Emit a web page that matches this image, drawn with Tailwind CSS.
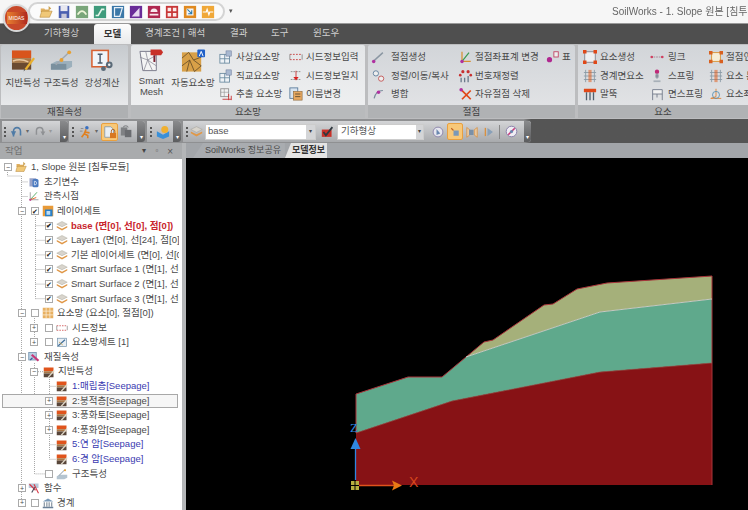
<!DOCTYPE html>
<html lang="ko">
<head>
  <meta charset="UTF-8">
  <title>SoilWorks</title>
  <script src="https://cdn.jsdelivr.net/npm/@tailwindcss/browser@4"></script>
</head>
<body class="w-[748px] h-[510px] overflow-hidden bg-[#555] font-['Liberation_Sans','Noto_Sans_CJK_KR',sans-serif] text-[9.5px] text-[#444]">

  <!-- shared icons -->
  <svg class="hidden">
    <symbol id="open" viewBox="0 0 16 16"><path d="M2 4h4l1 1h5v3H2z" fill="#e0b060"/><path d="M1 14l2-7h12l-3 7z" fill="#f0c878" stroke="#b08030" stroke-width=".6"/><path d="M11 1l3 3-3 2z" fill="#c9a050"/></symbol>
    <symbol id="save" viewBox="0 0 16 16"><rect x="2" y="1" width="12" height="14" fill="#4a5fb0"/><rect x="4" y="1" width="8" height="6" fill="#e8e8f0"/><rect x="5" y="10" width="6" height="5" fill="#c8c8d8"/></symbol>
    <symbol id="qa1" viewBox="0 0 16 16"><rect x="1" y="1" width="14" height="14" fill="#7aa67a"/><path d="M3 11q5-8 10 0" fill="none" stroke="#eef5d8" stroke-width="2"/></symbol>
    <symbol id="qa2" viewBox="0 0 16 16"><rect x="1" y="1" width="14" height="14" fill="#3f9b7c"/><path d="M3 12h3l4-7h3" fill="none" stroke="#e4f5ea" stroke-width="1.8"/></symbol>
    <symbol id="qa3" viewBox="0 0 16 16"><rect x="1" y="1" width="14" height="14" fill="#3c78a8"/><path d="M4 3h9l-3 10H4z" fill="none" stroke="#e8f0f8" stroke-width="1.4"/></symbol>
    <symbol id="qa4" viewBox="0 0 16 16"><rect x="1" y="1" width="14" height="14" fill="#6a2c98"/><path d="M3 13l9-10v10z" fill="#e8d8f0"/></symbol>
    <symbol id="qa5" viewBox="0 0 16 16"><rect x="1" y="1" width="14" height="14" fill="#b02850"/><path d="M4 8a4 4 0 018 0z" fill="#f8e8ee"/><rect x="3" y="10" width="10" height="2" fill="#f8e8ee"/></symbol>
    <symbol id="qa6" viewBox="0 0 16 16"><rect x="1" y="1" width="14" height="14" fill="#c83838"/><path d="M3 3h4v4H3zM9 3h4v4H9zM3 9h4v4H3zM9 9h4v4H9z" fill="#fbeaea"/></symbol>
    <symbol id="qa7" viewBox="0 0 16 16"><rect x="1" y="1" width="14" height="14" fill="#e08a20"/><rect x="4" y="4" width="8" height="8" fill="#f0f4f8"/><path d="M5 5l5 5M10 6v4H6" stroke="#2878a8" fill="none" stroke-width="1.2"/></symbol>
    <symbol id="qa8" viewBox="0 0 16 16"><rect x="1" y="1" width="14" height="14" fill="#f0a838"/><path d="M2 8h4l1-3 2 6 1-3h4" fill="none" stroke="#fff" stroke-width="1.4"/></symbol>

    <symbol id="ground" viewBox="0 0 26 24"><rect x="1" y="1" width="20" height="8" fill="#d8541c"/><rect x="1" y="9" width="20" height="5" fill="#a87848"/><rect x="1" y="14" width="20" height="7" fill="#6a4a30"/><path d="M2 12q8-3 16 1" stroke="#e8c8a0" fill="none" stroke-width="1.5"/><path d="M24 9L15 21" stroke="#e8b030" stroke-width="2.4"/><path d="M15 21l-2 2 1-3z" fill="#555"/></symbol>
    <symbol id="beam" viewBox="0 0 26 24"><path d="M2 15l6-3h16v6l-6 3H2z" fill="#9cb0bc"/><path d="M2 15h16v6H2z" fill="#7a909e"/><path d="M7 16L21 3" stroke="#a0a8b0" stroke-width="1.5"/><circle cx="21" cy="3" r="2" fill="#e8a030"/><circle cx="13" cy="11" r="2" fill="#e8a030"/></symbol>
    <symbol id="calc" viewBox="0 0 26 24"><rect x="2" y="1" width="17" height="17" fill="#f0f4f8" stroke="#d86030" stroke-width="1.6"/><path d="M8 5h5M8 14h5M10.500 5v9" stroke="#4a5a6a" stroke-width="1.5"/><circle cx="20" cy="16" r="3.500" fill="#5a6a78"/><circle cx="14" cy="20" r="2.500" fill="#5a6a78"/><circle cx="20" cy="16" r="1.300" fill="#eee"/></symbol>
    <symbol id="smesh" viewBox="0 0 26 24"><path d="M1 2h17v20H4z" fill="#f4f4f4" stroke="#7a7a8a"/><path d="M1 8l8 3 9-5M5 22l4-11 5 11M9 11l9 6M7 2l2 9" stroke="#8a8a98" fill="none" stroke-width=".8"/><path d="M12 0h11l2 3-2 3H12z" fill="#c83028"/><rect x="15" y="6" width="2" height="7" fill="#7a2030"/></symbol>
    <symbol id="amesh" viewBox="0 0 26 24"><rect x="1" y="3" width="20" height="20" fill="#d8a048"/><path d="M1 9l7-6 5 8 8-3M8 3v0M1 17l8-6 5 12M13 11l8 6M9 11l-3 12M14 23l7-6" stroke="#6a5028" fill="none" stroke-width=".9"/><rect x="17" y="0" width="8" height="8" rx="1" fill="#2060c8"/><path d="M19 7l2-5 2 5" stroke="#fff" fill="none"/></symbol>
    <symbol id="grid" viewBox="0 0 16 16"><rect x="1" y="5" width="11" height="10" fill="#eef2f6" stroke="#6a8aa0"/><path d="M1 10h11M6.500 5v10" stroke="#6a8aa0"/><rect x="8" y="1" width="6" height="6" fill="#a8b8d0" stroke="#6a7a9a" stroke-width=".6"/></symbol>
    <symbol id="grid2" viewBox="0 0 16 16"><rect x="2" y="2" width="9" height="9" fill="#f2f2f2" stroke="#909090"/><path d="M2 6h9M6 2v9" stroke="#909090" stroke-width=".7"/><path d="M4 14h10M11 8v7M14 10v5" stroke="#c83030"/></symbol>
    <symbol id="seed" viewBox="0 0 16 16"><path d="M1 5h14M1 11h14" stroke="#c83838" stroke-dasharray="2 1.500"/><path d="M1 5v6M15 5v6" stroke="#888"/></symbol>
    <symbol id="seedm" viewBox="0 0 16 16"><path d="M2 3h12M2 12h12" stroke="#888" stroke-dasharray="2 1"/><path d="M8 2v9" stroke="#c83030"/><path d="M5 9l3 4 3-4z" fill="#d82020"/></symbol>
    <symbol id="rename" viewBox="0 0 16 16"><rect x="1" y="1" width="9" height="12" fill="#d8e4f0" stroke="#5a7a9a"/><rect x="5" y="5" width="10" height="10" fill="#e8a860" stroke="#8a6a40" stroke-width=".7"/><path d="M7 8h6M7 11h6" stroke="#5a4a30"/></symbol>
    <symbol id="nline" viewBox="0 0 16 16"><path d="M2 13L13 3" stroke="#8a96a2" stroke-width="1.600"/><circle cx="2.500" cy="13" r="2" fill="#b030a0"/></symbol>
    <symbol id="nmove" viewBox="0 0 16 16"><circle cx="5" cy="5" r="3" fill="#eee" stroke="#5a7a9a"/><circle cx="11" cy="11" r="3" fill="#eee" stroke="#c05050"/></symbol>
    <symbol id="nmerge" viewBox="0 0 16 16"><path d="M3 13q2-9 10-9" stroke="#7a8a9a" fill="none" stroke-width="1.400"/><circle cx="8" cy="6" r="2" fill="#b030a0"/></symbol>
    <symbol id="naxis" viewBox="0 0 16 16"><path d="M4 2v11h10" stroke="#d89030" fill="none" stroke-width="1.400"/><path d="M4 13L12 3" stroke="#3a9a50" stroke-width="1.400"/><circle cx="4" cy="13" r="2" fill="#b030a0"/></symbol>
    <symbol id="nnum" viewBox="0 0 16 16"><path d="M3 10v5M7 10v5M11 8v7" stroke="#6a7a8a" stroke-width="1.500"/><circle cx="5" cy="3" r="1.800" fill="#c83030"/><circle cx="11" cy="3" r="1.800" fill="#c83030"/><circle cx="14" cy="7" r="1.500" fill="#c83030"/><circle cx="2" cy="7" r="1.500" fill="#c83030"/></symbol>
    <symbol id="ndel" viewBox="0 0 16 16"><path d="M3 3l11 11M14 4L4 14" stroke="#e04818" stroke-width="2"/><circle cx="3" cy="3" r="2" fill="#b030a0"/></symbol>
    <symbol id="ntable" viewBox="0 0 16 16"><circle cx="4" cy="11" r="3" fill="#b02890"/><rect x="9" y="2" width="5" height="6" fill="#eee" stroke="#c04060"/></symbol>
    <symbol id="eel" viewBox="0 0 16 16"><rect x="2" y="2" width="12" height="12" fill="#eef0f2" stroke="#80808a"/><path d="M0 0h4v4H0zM12 0h4v4h-4zM0 12h4v4H0zM12 12h4v4h-4z" fill="#e04818"/></symbol>
    <symbol id="ebnd" viewBox="0 0 16 16"><path d="M1 4h14M1 8h14M1 12h14M3 1v14M13 1v14" stroke="#8a9aa6"/><path d="M7 1v14M9 1v14" stroke="#e06020"/></symbol>
    <symbol id="epile" viewBox="0 0 16 16"><path d="M1 2h14v4H1z" fill="#e04818"/><path d="M4 6v9M8 6v9M12 6v9" stroke="#50606e" stroke-width="1.500"/></symbol>
    <symbol id="elink" viewBox="0 0 16 16"><path d="M1 8h14" stroke="#a08090" stroke-dasharray="2 1"/><circle cx="2" cy="8" r="1.500" fill="#d04060"/><circle cx="14" cy="8" r="1.500" fill="#d04060"/></symbol>
    <symbol id="espr" viewBox="0 0 16 16"><circle cx="8" cy="3" r="2.500" fill="#c02878"/><path d="M8 5v6M6 7h4M6 9h4" stroke="#707888"/><path d="M4 13h8v2H4z" fill="#a8b0b8"/></symbol>
    <symbol id="efsp" viewBox="0 0 16 16"><path d="M3 3h11v5H3zM3 8v7M14 8v7M8 8v4" fill="#f2f2f2" stroke="#707888"/></symbol>
    <symbol id="efr" viewBox="0 0 16 16"><rect x="3" y="3" width="10" height="10" fill="#f6eed8" stroke="#d89030"/><path d="M0 1h4v4H0zM12 1h4v4h-4zM0 11h4v4H0zM12 11h4v4h-4z" fill="#d86020"/></symbol>
    <symbol id="eax" viewBox="0 0 16 16"><path d="M8 2v9M2 13h12M8 11L2 13" stroke="#e08030" fill="none"/><circle cx="8" cy="9" r="4" fill="none" stroke="#5a90b0"/></symbol>

    <symbol id="doc" viewBox="0 0 16 16"><rect x="2" y="3" width="9" height="11" fill="#9aa4c8"/><rect x="6" y="4" width="8" height="11" rx="2" fill="#4a7ac0"/><path d="M8.500 7v5q3 0 3-2.500T8.500 7" stroke="#e8eef8" fill="none"/></symbol>
    <symbol id="axis" viewBox="0 0 16 16"><path d="M3 3v10h11" stroke="#8a8a8a" fill="none"/><path d="M3 13l9-10" stroke="#50a860" stroke-width="1.200"/><path d="M3 13l8-3" stroke="#e06020" stroke-width="1.200"/><circle cx="3" cy="13" r="1.500" fill="#c04090"/></symbol>
    <symbol id="layerset" viewBox="0 0 16 16"><rect x="1" y="1" width="14" height="14" fill="#e89a38"/><rect x="4" y="6" width="10" height="9" fill="#2a80c8"/><rect x="6" y="8" width="5" height="5" fill="#bcdcf4"/></symbol>
    <symbol id="layers" viewBox="0 0 16 16"><path d="M8 2l7 3.500-7 3.500-7-3.500z" fill="#d8d4cc" stroke="#9a958a" stroke-width=".5"/><path d="M1 8l7 3.500L15 8v2l-7 4-7-4z" fill="#e09848"/></symbol>
    <symbol id="mgrid" viewBox="0 0 16 16"><rect x="1" y="1" width="14" height="14" fill="#e8b060"/><path d="M1 5.500h14M1 10.500h14M5.500 1v14M10.500 1v14" stroke="#fbeed8"/></symbol>
    <symbol id="mset" viewBox="0 0 16 16"><rect x="2" y="3" width="12" height="11" fill="#e8eef4" stroke="#7a98b0"/><path d="M3 13l9-8" stroke="#3a6a98" stroke-width="1.500"/><path d="M4 8l5 4" stroke="#c8a040"/></symbol>
    <symbol id="mat" viewBox="0 0 16 16"><rect x="1" y="2" width="10" height="10" fill="#b8d0e4" stroke="#6a8aa8"/><path d="M5 5l9 8" stroke="#c83878" stroke-width="3"/><path d="M3 12l3-3" stroke="#3a5a98" stroke-width="1.500"/></symbol>
    <symbol id="soil" viewBox="0 0 16 16"><rect x="1" y="2" width="13" height="5" fill="#e0541c"/><rect x="1" y="7" width="13" height="3" fill="#a87848"/><rect x="1" y="10" width="13" height="5" fill="#58463a"/><path d="M15 6L7 15" stroke="#e0d8c8" stroke-width="1.600"/></symbol>
    <symbol id="struct" viewBox="0 0 16 16"><path d="M1 11l4-2h10v4l-4 2H1z" fill="#b4c4d0"/><path d="M4 10l8-8" stroke="#7a8a98" stroke-width="1.200"/><circle cx="12" cy="3" r="1.400" fill="#e8a030"/></symbol>
    <symbol id="func" viewBox="0 0 16 16"><rect x="1" y="2" width="13" height="6" fill="#b8c8d8"/><path d="M2 3l8 8M8 3l6 12" stroke="#d83848" stroke-width="1.500"/><path d="M5 14l4-7" stroke="#4a4a5a" stroke-width="1.500"/></symbol>
    <symbol id="bound" viewBox="0 0 16 16"><path d="M1 6l7-4 7 4z" fill="#7a9ab8"/><path d="M3 7v6M6.500 7v6M9.500 7v6M13 7v6" stroke="#6a7a8a" stroke-width="1.300"/><rect x="1" y="13" width="14" height="2" fill="#6a8098"/></symbol>

    <symbol id="undo" viewBox="0 0 16 16"><path d="M4 13V7a4 4 0 018 0v5" fill="none" stroke="#4f7ba6" stroke-width="1.800"/><path d="M1 7l3 6 3-6z" fill="#4f7ba6"/></symbol>
    <symbol id="redo" viewBox="0 0 16 16"><path d="M3 12V7a4 4 0 018 0v5" fill="none" stroke="#8f9194" stroke-width="1.800"/><path d="M8 8l3 5 3-5z" fill="#8f9194"/></symbol>
    <symbol id="run" viewBox="0 0 16 16"><circle cx="9" cy="3" r="2" fill="#3a70c0"/><path d="M8 5L6 10l-3 4M7 8l5 1M6 10l4 2v3" stroke="#e08020" fill="none" stroke-width="1.800"/><path d="M2 4h3M1 7h3" stroke="#888"/></symbol>
    <symbol id="lockdoc" viewBox="0 0 16 16"><path d="M2 2h7l3 3v9H2z" fill="#e8eef4" stroke="#8a9aa8"/><rect x="8" y="9" width="7" height="6" fill="#d87820"/><path d="M9.500 9V7a2 2 0 014 0v2" stroke="#a85a18" fill="none"/></symbol>
    <symbol id="lockg" viewBox="0 0 16 16"><rect x="1" y="3" width="8" height="10" fill="#7f8184"/><rect x="6" y="6" width="8" height="9" fill="#6a6c70"/><path d="M4 3a3 2 0 016 0" stroke="#6a6c70" fill="none"/></symbol>
    <symbol id="view3" viewBox="0 0 16 16"><path d="M1 7l7 4 7-4v6l-7 3-7-3z" fill="#3a90d8"/><circle cx="10" cy="5" r="4" fill="#f0b030"/></symbol>
    <symbol id="check" viewBox="0 0 16 16"><rect x="1" y="5" width="12" height="9" fill="#c83028"/><path d="M3 8l3 4 8-10" stroke="#30383f" fill="none" stroke-width="2.200"/></symbol>
    <symbol id="vcirc" viewBox="0 0 16 16"><circle cx="8" cy="8" r="6.500" fill="#e6e6ee" stroke="#7a70a0"/><path d="M6 4l5 6-5 2z" fill="#6a88b0"/></symbol>
    <symbol id="vsel" viewBox="0 0 16 16"><path d="M3 3l3 3" stroke="#c06020" stroke-width="1.500"/><rect x="6" y="6" width="7" height="7" fill="#7a98b8"/></symbol>
    <symbol id="vbox" viewBox="0 0 16 16"><path d="M1 2l4 3v7l-4 3zM15 2l-4 3v7l4 3z" fill="#e8c8a0" stroke="#d89040"/><rect x="4" y="5" width="6" height="7" fill="#7a90a8"/></symbol>
    <symbol id="vtri" viewBox="0 0 16 16"><path d="M5 2l8 6-8 6z" fill="#88a0b8"/><path d="M2 2v12" stroke="#d89040" stroke-width="2"/></symbol>
    <symbol id="vno" viewBox="0 0 16 16"><circle cx="8" cy="8" r="6.500" fill="#f0eef4" stroke="#7a70a0"/><path d="M4 12l8-8" stroke="#c83878" stroke-width="2"/><circle cx="8" cy="8" r="2" fill="#6a88b0"/></symbol>
  </svg>

  <div class="flex flex-col w-[748px] h-[510px] blur-[0.4px]">
    <!-- title row -->
    <div class="relative flex items-center h-[23px] bg-[#f6f6f6]">
      <div class="absolute left-[3px] top-[4px] z-10 flex items-center justify-center w-[27px] h-[28px] rounded-full border-2 border-[#d8d8d8] bg-[#c8492a] shadow">
        <div class="w-[20px] h-[12px] bg-linear-to-r from-[#e88030] to-[#b02820] text-[5px] leading-[12px] text-white text-center">MIDAS</div>
      </div>
      <div class="flex items-center gap-[4px] ml-[28px] w-[197px] h-[19px] pl-[9px] rounded-full border-2 border-[#d4d4d4] bg-[#fbfbfb]">
        <svg class="w-[14px] h-[14px]"><use href="#open"/></svg>
        <svg class="w-[14px] h-[14px]"><use href="#save"/></svg>
        <svg class="w-[14px] h-[14px]"><use href="#qa1"/></svg>
        <svg class="w-[14px] h-[14px]"><use href="#qa2"/></svg>
        <svg class="w-[14px] h-[14px]"><use href="#qa3"/></svg>
        <svg class="w-[14px] h-[14px]"><use href="#qa4"/></svg>
        <svg class="w-[14px] h-[14px]"><use href="#qa5"/></svg>
        <svg class="w-[14px] h-[14px]"><use href="#qa6"/></svg>
        <svg class="w-[14px] h-[14px]"><use href="#qa7"/></svg>
        <svg class="w-[14px] h-[14px]"><use href="#qa8"/></svg>
      </div>
      <span class="ml-[4px] text-[7px] text-[#555]">▾</span>
      <div class="ml-auto w-[136px] overflow-hidden whitespace-nowrap text-[10px] text-[#666]">SoilWorks - 1. Slope 원본 [침투모듈]</div>
    </div>

    <!-- ribbon tabs -->
    <div class="flex items-end h-[21px] bg-[#4f4f4f] text-[#cfcfcf] border-t border-[#999]">
      <span class="ml-[44px] mb-[4px] w-[50px]">기하형상</span>
      <span class="flex items-center justify-center w-[37px] h-[20px] rounded-t-[3px] bg-linear-to-b from-[#fdfdfd] to-[#e8e9ea] text-[#333] font-bold">모델</span>
      <span class="ml-[14px] mb-[4px] w-[85px]">경계조건 | 해석</span>
      <span class="mb-[4px] w-[41px]">결과</span>
      <span class="mb-[4px] w-[42px]">도구</span>
      <span class="mb-[4px]">윈도우</span>
    </div>

    <!-- ribbon -->
    <div class="flex gap-[3px] h-[75px] pt-[1px] pb-[1px] pl-[1px] bg-[#bcbdbf] overflow-hidden text-[#4a4a4a]">
      <div class="flex flex-col w-[127px] shrink-0 rounded-[2px] bg-linear-to-b from-[#c6cace] to-[#eff0f1]">
        <div class="flex flex-1 pl-[3px] pt-[4px]">
          <div class="flex flex-col items-center w-[38px]"><svg class="w-[25px] h-[24px]"><use href="#ground"/></svg><span class="mt-[3px] whitespace-nowrap">지반특성</span></div>
          <div class="flex flex-col items-center w-[38px]"><svg class="w-[25px] h-[24px]"><use href="#beam"/></svg><span class="mt-[3px] whitespace-nowrap">구조특성</span></div>
          <div class="flex flex-col items-center w-[44px]"><svg class="w-[25px] h-[24px]"><use href="#calc"/></svg><span class="mt-[3px] whitespace-nowrap">강성계산</span></div>
        </div>
        <div class="h-[13px] text-center leading-[13px] bg-[#aeb0b2] text-[#444]">재질속성</div>
      </div>

      <div class="flex flex-col w-[234px] shrink-0 rounded-[2px] bg-linear-to-b from-[#e4e6e8] to-[#f0f1f2]">
        <div class="flex flex-1 pt-[4px]">
          <div class="flex flex-col items-center w-[39px] ml-[1px] leading-[11px]"><svg class="w-[25px] h-[24px]"><use href="#smesh"/></svg><span class="mt-[2px] text-center">Smart<br>Mesh</span></div>
          <div class="flex flex-col items-center w-[44px]"><svg class="w-[25px] h-[24px]"><use href="#amesh"/></svg><span class="mt-[3px] whitespace-nowrap">자동요소망</span></div>
          <div class="ml-[4px] w-[70px] -mt-[1px]">
            <div class="flex items-center h-[18.500px]"><svg class="w-[14px] h-[14px] mr-[3px]"><use href="#grid"/></svg>사상요소망</div>
            <div class="flex items-center h-[18.500px]"><svg class="w-[14px] h-[14px] mr-[3px]"><use href="#grid"/></svg>직교요소망</div>
            <div class="flex items-center h-[18.500px]"><svg class="w-[14px] h-[14px] mr-[3px]"><use href="#grid2"/></svg>추출 요소망</div>
          </div>
          <div class="w-[72px] -mt-[1px]">
            <div class="flex items-center h-[18.500px]"><svg class="w-[14px] h-[14px] mr-[3px]"><use href="#seed"/></svg>시드정보입력</div>
            <div class="flex items-center h-[18.500px]"><svg class="w-[14px] h-[14px] mr-[3px]"><use href="#seedm"/></svg>시드정보일치</div>
            <div class="flex items-center h-[18.500px]"><svg class="w-[14px] h-[14px] mr-[3px]"><use href="#rename"/></svg>이름변경</div>
          </div>
        </div>
        <div class="h-[13px] text-center leading-[13px] bg-[#b8babc] text-[#444]">요소망</div>
      </div>

      <div class="flex flex-col w-[207px] shrink-0 rounded-[2px] bg-linear-to-b from-[#d2d5d9] to-[#e4e5e7]">
        <div class="flex flex-1 pt-[3px] pl-[3px]">
          <div class="w-[87px]">
            <div class="flex items-center h-[18.500px]"><svg class="w-[15px] h-[14px] mr-[5px]"><use href="#nline"/></svg>절점생성</div>
            <div class="flex items-center h-[18.500px]"><svg class="w-[15px] h-[14px] mr-[5px]"><use href="#nmove"/></svg>정렬/이동/복사</div>
            <div class="flex items-center h-[18.500px]"><svg class="w-[15px] h-[14px] mr-[5px]"><use href="#nmerge"/></svg>병합</div>
          </div>
          <div class="w-[88px]">
            <div class="flex items-center h-[18.500px]"><svg class="w-[15px] h-[14px] mr-[2px]"><use href="#naxis"/></svg>절점좌표계 변경</div>
            <div class="flex items-center h-[18.500px]"><svg class="w-[15px] h-[14px] mr-[2px]"><use href="#nnum"/></svg>번호재정렬</div>
            <div class="flex items-center h-[18.500px]"><svg class="w-[15px] h-[14px] mr-[2px]"><use href="#ndel"/></svg>자유절점 삭제</div>
          </div>
          <div class="flex items-center h-[18.500px]"><svg class="w-[14px] h-[14px] mr-[2px]"><use href="#ntable"/></svg>표</div>
        </div>
        <div class="h-[13px] text-center leading-[13px] bg-[#b0b2b4] text-[#444]">절점</div>
      </div>

      <div class="flex flex-col w-[170px] shrink-0 bg-linear-to-b from-[#d2d5d9] to-[#e4e5e7]">
        <div class="flex flex-1 pt-[3px] pl-[5px] overflow-hidden whitespace-nowrap">
          <div class="w-[67px] shrink-0">
            <div class="flex items-center h-[18.500px]"><svg class="w-[14px] h-[14px] mr-[3px]"><use href="#eel"/></svg>요소생성</div>
            <div class="flex items-center h-[18.500px]"><svg class="w-[14px] h-[14px] mr-[3px]"><use href="#ebnd"/></svg>경계면요소</div>
            <div class="flex items-center h-[18.500px]"><svg class="w-[14px] h-[14px] mr-[3px]"><use href="#epile"/></svg>말뚝</div>
          </div>
          <div class="w-[59px] shrink-0">
            <div class="flex items-center h-[18.500px]"><svg class="w-[14px] h-[14px] mr-[4px]"><use href="#elink"/></svg>링크</div>
            <div class="flex items-center h-[18.500px]"><svg class="w-[14px] h-[14px] mr-[4px]"><use href="#espr"/></svg>스프링</div>
            <div class="flex items-center h-[18.500px]"><svg class="w-[14px] h-[14px] mr-[4px]"><use href="#efsp"/></svg>면스프링</div>
          </div>
          <div class="shrink-0">
            <div class="flex items-center h-[18.500px]"><svg class="w-[14px] h-[14px] mr-[3px]"><use href="#efr"/></svg>절점연결</div>
            <div class="flex items-center h-[18.500px]"><svg class="w-[14px] h-[14px] mr-[3px]"><use href="#ebnd"/></svg>요소 분할</div>
            <div class="flex items-center h-[18.500px]"><svg class="w-[14px] h-[14px] mr-[3px]"><use href="#eax"/></svg>요소좌표계</div>
          </div>
        </div>
        <div class="h-[13px] text-center leading-[13px] bg-[#b0b2b4] text-[#444]">요소</div>
      </div>
    </div>

    <!-- toolbars -->
    <div class="flex h-[24px] pt-[2px] pb-[1px] pl-[2px] gap-[1px] bg-linear-to-r from-[#8f9092] from-[70%] to-[#555] to-[71%] text-[#666]">
      <div class="flex items-center w-[66px] rounded-r-[3px] bg-linear-to-b from-[#d4d5d7] to-[#a8aaad]">
        <span class="ml-[2px] w-[2px] h-[10px] border-l-2 border-dotted border-[#555]"></span>
        <svg class="ml-[4px] w-[14px] h-[14px]"><use href="#undo"/></svg><span class="ml-[2px] text-[6px]">▾</span>
        <svg class="ml-[5px] w-[13px] h-[13px]"><use href="#redo"/></svg><span class="ml-[2px] text-[6px] text-[#999]">▾</span>
        <span class="ml-auto flex items-end justify-center w-[8px] h-full rounded-r-[3px] bg-linear-to-b from-[#8a8b8d] to-[#5c5d5f] text-[6px] text-white">▾</span>
      </div>
      <div class="flex items-center w-[76px] rounded-r-[3px] bg-linear-to-b from-[#d4d5d7] to-[#a8aaad]">
        <span class="ml-[3px] w-[2px] h-[10px] border-l-2 border-dotted border-[#555]"></span>
        <svg class="ml-[5px] w-[14px] h-[14px]"><use href="#run"/></svg><span class="ml-[2px] text-[6px]">▾</span>
        <span class="ml-[3px] flex items-center justify-center w-[17px] h-[18px] rounded-[2px] border border-[#e8a040] bg-[#f8c878]"><svg class="w-[14px] h-[14px]"><use href="#lockdoc"/></svg></span>
        <svg class="ml-[2px] w-[13px] h-[13px]"><use href="#lockg"/></svg>
        <span class="ml-auto flex items-end justify-center w-[8px] h-full rounded-r-[3px] bg-linear-to-b from-[#8a8b8d] to-[#5c5d5f] text-[6px] text-white">▾</span>
      </div>
      <div class="flex items-center w-[34px] ml-[1px] rounded-r-[3px] bg-linear-to-b from-[#d4d5d7] to-[#a8aaad]">
        <span class="ml-[3px] w-[2px] h-[10px] border-l-2 border-dotted border-[#555]"></span>
        <svg class="ml-[4px] w-[14px] h-[14px]"><use href="#view3"/></svg>
        <span class="ml-auto flex items-end justify-center w-[8px] h-full rounded-r-[3px] bg-linear-to-b from-[#8a8b8d] to-[#5c5d5f] text-[6px] text-white">▾</span>
      </div>
      <div class="flex items-center w-[348px] ml-[1px] rounded-r-[3px] bg-linear-to-b from-[#d4d5d7] to-[#a8aaad]">
        <span class="ml-[3px] w-[2px] h-[10px] border-l-2 border-dotted border-[#555]"></span>
        <svg class="ml-[2px] w-[13px] h-[13px]"><use href="#layers"/></svg>
        <div class="flex items-center ml-[2px] w-[111px] h-[16px] bg-white border border-[#ccc]">
          <span class="pl-[2px] text-[#555]">base</span>
          <span class="ml-auto flex items-center justify-center w-[9px] h-full bg-[#d4d5d7] text-[6px] text-[#444]">▾</span>
        </div>
        <svg class="ml-[5px] w-[13px] h-[14px]"><use href="#check"/></svg>
        <div class="flex items-center ml-[3px] w-[87px] h-[16px] bg-white border border-[#ccc]">
          <span class="pl-[3px] text-[#555]">기하형상</span>
          <span class="ml-auto flex items-center justify-center w-[7px] h-full bg-[#d4d5d7] text-[6px] text-[#444]">▾</span>
        </div>
        <svg class="ml-[8px] w-[12px] h-[12px]"><use href="#vcirc"/></svg>
        <span class="ml-[3px] flex items-center justify-center w-[16px] h-[17px] rounded-[2px] border border-[#e8a040] bg-[#f8c878]"><svg class="w-[12px] h-[12px]"><use href="#vsel"/></svg></span>
        <svg class="ml-[3px] w-[12px] h-[12px]"><use href="#vbox"/></svg>
        <svg class="ml-[6px] w-[11px] h-[12px]"><use href="#vtri"/></svg>
        <span class="ml-[4px] w-px h-[14px] bg-[#888]"></span>
        <svg class="ml-[5px] w-[13px] h-[13px]"><use href="#vno"/></svg>
        <span class="ml-auto flex items-end justify-center w-[7px] h-full rounded-r-[3px] bg-linear-to-b from-[#8a8b8d] to-[#5c5d5f] text-[6px] text-white">▾</span>
      </div>
    </div>

    <!-- main -->
    <div class="flex flex-1 min-h-0">
      <div class="flex flex-col w-[182px] shrink-0 bg-white">
        <div class="flex items-center h-[16px] pl-[5px] bg-[#a9abad] text-[#707070]">
          <span>작업</span>
          <span class="ml-[120px] text-[8px] text-[#444]">▾</span>
          <span class="ml-[9px] text-[8px] text-[#555]">▫</span>
          <span class="ml-[9px] text-[10px] text-[#555]">×</span>
        </div>

        <!-- tree -->
        <div class="relative flex-1 pt-px overflow-hidden whitespace-nowrap text-[#4a4a4a]">
          <svg class="absolute left-0 top-px w-[182px] h-[351px]" fill="none" stroke="#a8a8a8" stroke-dasharray="1 1">
            <path d="M7.500 12V16H21.500V343H24M21.500 21.900H28M21.500 36.500H28M21.500 51.100H18M21.500 153.300H18M21.500 197.100H18M21.500 328.500H18"/>
            <path d="M35.500 56V138.700M35.500 65.700H45M35.500 80.300H45M35.500 94.900H45M35.500 109.500H45M35.500 124.100H45M35.500 138.700H45"/>
            <path d="M34.500 158V182.500M34.500 167.900H38M34.500 182.500H38"/>
            <path d="M34.500 203V313.900H45M38 211.700H43"/>
            <path d="M49.500 217V299.300M49.500 226.300H56M49.500 284.700H56M49.500 299.300H56"/>
          </svg>

          <div class="relative flex items-center h-[14.600px] pl-[4px]">
            <span class="flex items-center justify-center w-[8px] h-[8px] mr-[3px] border border-[#aaa] bg-white text-[7px] leading-none">−</span>
            <svg class="w-[12px] h-[12px] mr-[4px]"><use href="#open"/></svg>1, Slope 원본 [침투모듈]
          </div>
          <div class="relative flex items-center h-[14.600px] pl-[28px]"><svg class="w-[12px] h-[12px] mr-[4px]"><use href="#doc"/></svg>초기변수</div>
          <div class="relative flex items-center h-[14.600px] pl-[28px]"><svg class="w-[12px] h-[12px] mr-[4px]"><use href="#axis"/></svg>관측시점</div>
          <div class="relative flex items-center h-[14.600px] pl-[18px]">
            <span class="flex items-center justify-center w-[8px] h-[8px] mr-[5px] border border-[#aaa] bg-white text-[7px] leading-none">−</span>
            <span class="flex items-center justify-center w-[8px] h-[8px] mr-[3px] border border-[#aaa] bg-white text-[7px] leading-none text-[#222]">✔</span>
            <svg class="w-[12px] h-[12px] mr-[3px]"><use href="#layerset"/></svg>레이어세트
          </div>
          <div class="relative flex items-center h-[14.600px] pl-[45px] font-bold text-[#c8242c]">
            <span class="flex items-center justify-center w-[8px] h-[8px] mr-[3px] border border-[#aaa] bg-white text-[7px] leading-none text-[#222]">✔</span>
            <svg class="w-[12px] h-[12px] mr-[3px]"><use href="#layers"/></svg><span class="w-[108px] overflow-hidden">base (면[0], 선[0], 점[0])</span>
          </div>
          <div class="relative flex items-center h-[14.600px] pl-[45px]">
            <span class="flex items-center justify-center w-[8px] h-[8px] mr-[3px] border border-[#aaa] bg-white text-[7px] leading-none text-[#222]">✔</span>
            <svg class="w-[12px] h-[12px] mr-[3px]"><use href="#layers"/></svg><span class="w-[108px] overflow-hidden">Layer1 (면[0], 선[24], 점[0])</span>
          </div>
          <div class="relative flex items-center h-[14.600px] pl-[45px]">
            <span class="flex items-center justify-center w-[8px] h-[8px] mr-[3px] border border-[#aaa] bg-white text-[7px] leading-none text-[#222]">✔</span>
            <svg class="w-[12px] h-[12px] mr-[3px]"><use href="#layers"/></svg><span class="w-[108px] overflow-hidden">기본 레이어세트 (면[0], 선[0])</span>
          </div>
          <div class="relative flex items-center h-[14.600px] pl-[45px]">
            <span class="flex items-center justify-center w-[8px] h-[8px] mr-[3px] border border-[#aaa] bg-white text-[7px] leading-none text-[#222]">✔</span>
            <svg class="w-[12px] h-[12px] mr-[3px]"><use href="#layers"/></svg><span class="w-[108px] overflow-hidden">Smart Surface 1 (면[1], 선[0])</span>
          </div>
          <div class="relative flex items-center h-[14.600px] pl-[45px]">
            <span class="flex items-center justify-center w-[8px] h-[8px] mr-[3px] border border-[#aaa] bg-white text-[7px] leading-none text-[#222]">✔</span>
            <svg class="w-[12px] h-[12px] mr-[3px]"><use href="#layers"/></svg><span class="w-[108px] overflow-hidden">Smart Surface 2 (면[1], 선[0])</span>
          </div>
          <div class="relative flex items-center h-[14.600px] pl-[45px]">
            <span class="flex items-center justify-center w-[8px] h-[8px] mr-[3px] border border-[#aaa] bg-white text-[7px] leading-none text-[#222]">✔</span>
            <svg class="w-[12px] h-[12px] mr-[3px]"><use href="#layers"/></svg><span class="w-[108px] overflow-hidden">Smart Surface 3 (면[1], 선[0])</span>
          </div>
          <div class="relative flex items-center h-[14.600px] pl-[18px]">
            <span class="flex items-center justify-center w-[8px] h-[8px] mr-[5px] border border-[#aaa] bg-white text-[7px] leading-none">−</span>
            <span class="w-[8px] h-[8px] mr-[3px] border border-[#aaa] bg-white"></span>
            <svg class="w-[12px] h-[12px] mr-[3px]"><use href="#mgrid"/></svg>요소망 (요소[0], 절점[0])
          </div>
          <div class="relative flex items-center h-[14.600px] pl-[30px]">
            <span class="flex items-center justify-center w-[8px] h-[8px] mr-[7px] border border-[#aaa] bg-white text-[7px] leading-none">+</span>
            <span class="w-[8px] h-[8px] mr-[3px] border border-[#aaa] bg-white"></span>
            <svg class="w-[12px] h-[12px] mr-[4px]"><use href="#seed"/></svg>시드정보
          </div>
          <div class="relative flex items-center h-[14.600px] pl-[30px]">
            <span class="flex items-center justify-center w-[8px] h-[8px] mr-[7px] border border-[#aaa] bg-white text-[7px] leading-none">+</span>
            <span class="w-[8px] h-[8px] mr-[3px] border border-[#aaa] bg-white"></span>
            <svg class="w-[12px] h-[12px] mr-[4px]"><use href="#mset"/></svg>요소망세트 [1]
          </div>
          <div class="relative flex items-center h-[14.600px] pl-[18px]">
            <span class="flex items-center justify-center w-[8px] h-[8px] mr-[2px] border border-[#aaa] bg-white text-[7px] leading-none">−</span>
            <svg class="w-[12px] h-[12px] mr-[4px]"><use href="#mat"/></svg>재질속성
          </div>
          <div class="relative flex items-center h-[14.600px] pl-[30px]">
            <span class="flex items-center justify-center w-[8px] h-[8px] mr-[5px] border border-[#aaa] bg-white text-[7px] leading-none">−</span>
            <svg class="w-[12px] h-[12px] mr-[3px]"><use href="#soil"/></svg>지반특성
          </div>
          <div class="relative flex items-center h-[14.600px] pl-[56px] text-[#3a3ab0]"><svg class="w-[12px] h-[12px] mr-[4px]"><use href="#soil"/></svg>1:매립층[Seepage]</div>
          <div class="relative flex items-center h-[14.600px] ml-[2px] w-[176px] pl-[42px] border border-[#a8a8a8] bg-[#f6f6f6]">
            <span class="flex items-center justify-center w-[8px] h-[8px] mr-[3px] border border-[#aaa] bg-white text-[7px] leading-none">+</span>
            <svg class="w-[12px] h-[12px] mr-[4px]"><use href="#soil"/></svg>2:붕적층[Seepage]
          </div>
          <div class="relative flex items-center h-[14.600px] pl-[45px]">
            <span class="flex items-center justify-center w-[8px] h-[8px] mr-[3px] border border-[#aaa] bg-white text-[7px] leading-none">+</span>
            <svg class="w-[12px] h-[12px] mr-[4px]"><use href="#soil"/></svg>3:풍화토[Seepage]
          </div>
          <div class="relative flex items-center h-[14.600px] pl-[45px]">
            <span class="flex items-center justify-center w-[8px] h-[8px] mr-[3px] border border-[#aaa] bg-white text-[7px] leading-none">+</span>
            <svg class="w-[12px] h-[12px] mr-[4px]"><use href="#soil"/></svg>4:풍화암[Seepage]
          </div>
          <div class="relative flex items-center h-[14.600px] pl-[56px] text-[#3a3ab0]"><svg class="w-[12px] h-[12px] mr-[4px]"><use href="#soil"/></svg>5:연 암[Seepage]</div>
          <div class="relative flex items-center h-[14.600px] pl-[56px] text-[#3a3ab0]"><svg class="w-[12px] h-[12px] mr-[4px]"><use href="#soil"/></svg>6:경 암[Seepage]</div>
          <div class="relative flex items-center h-[14.600px] pl-[45px]">
            <span class="w-[8px] h-[8px] mr-[3px] border border-[#aaa] bg-white"></span>
            <svg class="w-[12px] h-[12px] mr-[4px]"><use href="#struct"/></svg>구조특성
          </div>
          <div class="relative flex items-center h-[14.600px] pl-[18px]">
            <span class="flex items-center justify-center w-[8px] h-[8px] mr-[2px] border border-[#aaa] bg-white text-[7px] leading-none">+</span>
            <svg class="w-[12px] h-[12px] mr-[4px]"><use href="#func"/></svg>함수
          </div>
          <div class="relative flex items-center h-[14.600px] pl-[18px]">
            <span class="flex items-center justify-center w-[8px] h-[8px] mr-[5px] border border-[#aaa] bg-white text-[7px] leading-none">+</span>
            <span class="w-[8px] h-[8px] mr-[3px] border border-[#aaa] bg-white"></span>
            <svg class="w-[12px] h-[12px] mr-[3px]"><use href="#bound"/></svg>경계
          </div>
        </div>
      </div>

      <div class="w-[4px] shrink-0 bg-[#b4b6b8]"></div>

      <!-- model view -->
      <div class="flex flex-col flex-1 min-w-0">
        <div class="flex items-center h-[15px] bg-[#a2a5a9]">
          <span class="ml-[7px] pl-[12px] pr-[4px] h-full leading-[15px] text-[9px] bg-[#a9acb0] [clip-path:polygon(10px_0,100%_0,100%_100%,0_100%)] text-[#4a4a4a]">SoilWorks 정보공유</span>
          <span class="pl-[7px] pr-[2px] h-full leading-[15px] text-[9px] bg-[#e4e4e4] [clip-path:polygon(6px_0,100%_0,100%_100%,0_100%)] font-bold text-[#333]">모델정보</span>
        </div>
        <svg class="flex-1 w-[562px] bg-black" viewBox="186 158 562 352">
          <polygon points="356,394 408,377 442,377 466,357 600,312 712,299 712,363 600,372 452,401 356,433" fill="#5fa98c"/>
          <polygon points="466,357 484,342 493,340 544,305 553,304 577,289 607,283 712,276 712,299 600,312" fill="#a5b07a"/>
          <polygon points="356,433 452,401 600,372 712,363 712,485 356,485" fill="#871215"/>
          <polyline points="356,433 356,394 408,377 442,377 466,357 484,342 493,340 544,305 553,304 577,289 607,283 712,276 712,485" fill="none" stroke="#a8343a"/>
          <polyline points="466,357 600,312 712,299" fill="none" stroke="#c4ccc4"/>
          <polyline points="356,433 452,401 600,372 712,363" fill="none" stroke="#a05a50" stroke-width=".7"/>
          <path d="M355.500 480V445" stroke="#2f86e0" stroke-width="1.300"/>
          <path d="M355.500 438l-5 11h10z" fill="#2f86e0"/>
          <text x="350" y="432" font-size="13" font-family="Liberation Serif" fill="#2f86e0">Z</text>
          <path d="M359 485.500H396" stroke="#e0521c" stroke-width="1.500"/>
          <path d="M402 485.500l-10-5 2 5-2 5z" fill="#e87a14"/>
          <text x="409" y="487" font-size="14" font-family="Liberation Sans" fill="#d8481c">X</text>
          <rect x="351" y="481" width="8" height="9" fill="#b8b040"/>
          <path d="M355 481v9M351 485.500h8" stroke="#000"/>
        </svg>
      </div>
    </div>
  </div>
</body>
</html>
